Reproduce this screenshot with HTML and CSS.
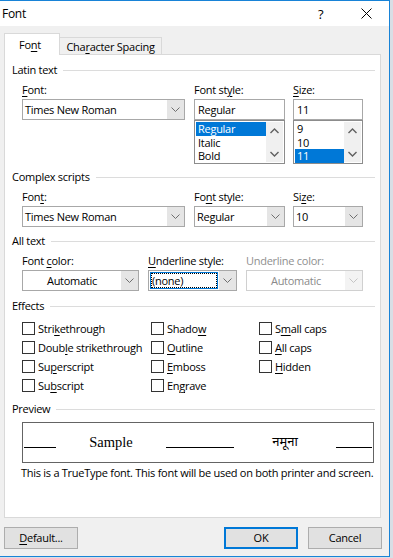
FILE: index.html
```html
<!DOCTYPE html>
<html>
<head>
<meta charset="utf-8">
<link rel="stylesheet" href="styles.css">
</head>
<body>
<div class="dialog">
  <div class="titlebar">
    <span class="title">Font</span>
    <span class="help">?</span>
    <svg class="close" width="11" height="11" viewBox="0 0 11 11"><path d="M0.5 0.5 L10.5 10.5 M10.5 0.5 L0.5 10.5" stroke="#000" stroke-width="1" fill="none"/></svg>
  </div>
  <div class="body">
    <div class="tabs">
      <div class="tab active">Fo<u>n</u>t</div>
      <div class="tab">Cha<u>r</u>acter Spacing</div>
    </div>
    <div class="panel">
      <div class="group-head"><span>Latin text</span><i class="rule"></i></div>
      <div class="row">
        <div class="field c-font">
          <div class="lbl"><u>F</u>ont:</div>
          <div class="combo"><span class="val">Times New Roman</span><span class="btn"><svg width="9" height="5" viewBox="0 0 9 5"><path d="M0.5 0.5 L4.5 4.5 L8.5 0.5" stroke="#6e6e6e" fill="none"/></svg></span></div>
        </div>
        <div class="field c-style">
          <div class="lbl">Font st<u>y</u>le:</div>
          <div class="textbox">Regular</div>
          <div class="listbox">
            <div class="items">
              <div class="item sel">Regular</div>
              <div class="item">Italic</div>
              <div class="item">Bold</div>
            </div>
            <div class="scroll">
              <svg width="9" height="6" viewBox="0 0 9 6"><path d="M0.5 5 L4.5 1 L8.5 5" stroke="#606060" stroke-width="1.4" fill="none"/></svg>
              <svg width="9" height="6" viewBox="0 0 9 6"><path d="M0.5 1 L4.5 5 L8.5 1" stroke="#606060" stroke-width="1.4" fill="none"/></svg>
            </div>
          </div>
        </div>
        <div class="field c-size">
          <div class="lbl"><u>S</u>ize:</div>
          <div class="textbox">11</div>
          <div class="listbox">
            <div class="items">
              <div class="item">9</div>
              <div class="item">10</div>
              <div class="item sel">11</div>
            </div>
            <div class="scroll">
              <svg width="9" height="6" viewBox="0 0 9 6"><path d="M0.5 5 L4.5 1 L8.5 5" stroke="#606060" stroke-width="1.4" fill="none"/></svg>
              <svg width="9" height="6" viewBox="0 0 9 6"><path d="M0.5 1 L4.5 5 L8.5 1" stroke="#606060" stroke-width="1.4" fill="none"/></svg>
            </div>
          </div>
        </div>
      </div>

      <div class="group-head g2"><span>Complex scripts</span><i class="rule"></i></div>
      <div class="row">
        <div class="field c-font">
          <div class="lbl">Fon<u>t</u>:</div>
          <div class="combo"><span class="val">Times New Roman</span><span class="btn"><svg width="9" height="5" viewBox="0 0 9 5"><path d="M0.5 0.5 L4.5 4.5 L8.5 0.5" stroke="#6e6e6e" fill="none"/></svg></span></div>
        </div>
        <div class="field c-style">
          <div class="lbl">Fo<u>n</u>t style:</div>
          <div class="combo"><span class="val">Regular</span><span class="btn"><svg width="9" height="5" viewBox="0 0 9 5"><path d="M0.5 0.5 L4.5 4.5 L8.5 0.5" stroke="#6e6e6e" fill="none"/></svg></span></div>
        </div>
        <div class="field c-size">
          <div class="lbl">Si<u>z</u>e:</div>
          <div class="combo"><span class="val">10</span><span class="btn"><svg width="9" height="5" viewBox="0 0 9 5"><path d="M0.5 0.5 L4.5 4.5 L8.5 0.5" stroke="#6e6e6e" fill="none"/></svg></span></div>
        </div>
      </div>

      <div class="group-head g3"><span>All text</span><i class="rule"></i></div>
      <div class="row row-all">
        <div class="field c-color">
          <div class="lbl">Font <u>c</u>olor:</div>
          <div class="combo"><span class="val center">Automatic</span><span class="btn"><svg width="9" height="5" viewBox="0 0 9 5"><path d="M0.5 0.5 L4.5 4.5 L8.5 0.5" stroke="#6e6e6e" fill="none"/></svg></span></div>
        </div>
        <div class="field c-ustyle">
          <div class="lbl"><u>U</u>nderline style:</div>
          <div class="combo focus"><span class="val"><span class="focusbox">(none)</span></span><span class="btn"><svg width="9" height="5" viewBox="0 0 9 5"><path d="M0.5 0.5 L4.5 4.5 L8.5 0.5" stroke="#6e6e6e" fill="none"/></svg></span></div>
        </div>
        <div class="field c-ucolor">
          <div class="lbl disabled">Underline color:</div>
          <div class="combo dis"><span class="val center">Automatic</span><span class="btn"><svg width="9" height="5" viewBox="0 0 9 5"><path d="M0.5 0.5 L4.5 4.5 L8.5 0.5" stroke="#c4c4c4" fill="none"/></svg></span></div>
        </div>
      </div>

      <div class="group-head g4"><span>Effects</span><i class="rule"></i></div>
      <div class="effects">
        <div class="chk"><span class="box"></span><span>Stri<u>k</u>ethrough</span></div>
        <div class="chk"><span class="box"></span><span>Shado<u>w</u></span></div>
        <div class="chk"><span class="box"></span><span>S<u>m</u>all caps</span></div>
        <div class="chk"><span class="box"></span><span>Doub<u>l</u>e strikethrough</span></div>
        <div class="chk"><span class="box"></span><span><u>O</u>utline</span></div>
        <div class="chk"><span class="box"></span><span><u>A</u>ll caps</span></div>
        <div class="chk"><span class="box"></span><span>Su<u>p</u>erscript</span></div>
        <div class="chk"><span class="box"></span><span><u>E</u>mboss</span></div>
        <div class="chk"><span class="box"></span><span><u>H</u>idden</span></div>
        <div class="chk"><span class="box"></span><span>Su<u>b</u>script</span></div>
        <div class="chk"><span class="box"></span><span>En<u>g</u>rave</span></div>
      </div>

      <div class="group-head g5"><span>Preview</span><i class="rule"></i></div>
      <div class="preview">
        <span class="pline l1"></span>
        <span class="ptext s1">Sample</span>
        <span class="pline l2"></span>
        <span class="ptext s2 deva">नमूना</span>
        <span class="pline l3"></span>
      </div>
      <div class="note">This is a TrueType font. This font will be used on both printer and screen.</div>
    </div>
    <div class="buttons">
      <div class="button b-default"><u>D</u>efault...</div>
      <div class="button b-ok">OK</div>
      <div class="button b-cancel">Cancel</div>
    </div>
  </div>
</div>
</body>
</html>
```

FILE: styles.css
```css
html, body {
  margin: 0;
  padding: 0;
}
body {
  width: 393px;
  height: 558px;
  overflow: hidden;
  background: #d9dee5;
  font-family: "Open Sans", "Noto Sans", sans-serif;
  font-size: 11px;
  letter-spacing: -0.27px;
  color: #000;
}
u {
  text-decoration-thickness: 1px;
  text-underline-offset: 2px;
}
.dialog {
  width: 389px;
  height: 555px;
  border: 1px solid #1883d7;
  border-left: none;
  background: #f0f0f0;
  display: flex;
  flex-direction: column;
}
.titlebar {
  height: 25px;
  background: #fff;
  display: flex;
  align-items: center;
  padding-right: 17px;
}
.title {
  margin-left: 2px;
  font-size: 12px;
}
.help {
  margin-left: auto;
  font-size: 13px;
  width: 7px;
  margin-right: 36px;
}
.close {
  display: block;
}
.body {
  padding-top: 7px;
  display: flex;
  flex-direction: column;
}
.tabs {
  display: flex;
  align-items: flex-end;
  height: 22px;
  padding-left: 4px;
  margin-bottom: -1px;
}
.tab {
  box-sizing: border-box;
  height: 18px;
  border: 1px solid #d9d9d9;
  border-bottom: none;
  border-left: none;
  background: #f0f0f0;
  width: 102px;
  text-align: center;
  line-height: 17px;
}
.tab.active {
  position: relative;
  z-index: 1;
  height: 22px;
  width: 56px;
  border-left: 1px solid #d9d9d9;
  background: #fff;
  line-height: 22px;
  padding-right: 4px;
}
.panel {
  box-sizing: border-box;
  height: 464px;
  margin: 0 8px 0 4px;
  border: 1px solid #d9d9d9;
  background: #fff;
  padding: 8px 5px 0 7px;
}
.group-head {
  display: flex;
  align-items: center;
  height: 14px;
  line-height: 14px;
  margin-bottom: 6px;
}
.group-head .rule {
  flex: 1;
  height: 1px;
  background: #dcdcdc;
  margin-left: 6px;
}
.g2 { margin-top: 6px; }
.g3 { margin-top: 7px; }
.g4 { margin-top: 8px; }
.g5 { margin-top: 7px; }
.row {
  display: flex;
  margin-left: 10px;
}
.field {
  display: flex;
  flex-direction: column;
}
.c-font { width: 163px; margin-right: 9px; }
.c-style { width: 91px; margin-right: 8px; }
.c-size { width: 70px; }
.c-color { width: 117px; margin-right: 9px; }
.c-ustyle { width: 89px; margin-right: 9px; }
.c-ucolor { width: 117px; }
.lbl {
  height: 14px;
  line-height: 14px;
  margin-bottom: 2px;
  white-space: nowrap;
}
.lbl.disabled {
  color: #8f8f8f;
}
.combo {
  box-sizing: border-box;
  height: 21px;
  border: 1px solid #a8a8a8;
  background: #fff;
  display: flex;
}
.combo .val {
  flex: 1;
  padding-left: 2px;
  line-height: 19px;
  white-space: nowrap;
  overflow: hidden;
}
.combo .val.center {
  text-align: center;
  padding-left: 0;
}
.combo .btn {
  width: 17px;
  background: #e5e5e5;
  display: flex;
  align-items: center;
  justify-content: center;
}
.combo.dis {
  border-color: #d0d0d0;
  color: #8a8a8a;
}
.combo.dis .btn {
  background: #f3f3f3;
}
.combo.focus .val {
  padding: 1px;
  display: flex;
}
.focusbox {
  flex: 1;
  border: 1px solid #0078d7;
  outline: 1px dotted #000;
  outline-offset: -2px;
  line-height: 15px;
  padding-left: 1px;
}
.textbox {
  box-sizing: border-box;
  height: 21px;
  border: 1px solid #a8a8a8;
  padding-left: 3px;
  line-height: 19px;
}
.listbox {
  box-sizing: border-box;
  height: 44px;
  border: 1px solid #8c8c8c;
  padding: 1px;
  display: flex;
}
.items {
  flex: 1;
}
.item {
  height: 13.5px;
  line-height: 13px;
  padding-left: 2px;
}
.item.sel {
  background: #0078d7;
  color: #fff;
}
.scroll {
  width: 17px;
  background: #f0f0f0;
  display: flex;
  flex-direction: column;
  align-items: center;
  justify-content: space-between;
  padding: 6px 0 5px;
  box-sizing: border-box;
}
.scroll svg { display: block; }
.effects {
  display: grid;
  grid-template-columns: 129px 108px 1fr;
  grid-auto-rows: 19px;
  margin-left: 10px;
  margin-top: 4px;
}
.chk {
  display: flex;
  align-items: center;
  white-space: nowrap;
}
.chk .box {
  box-sizing: border-box;
  width: 13px;
  height: 13px;
  border: 1px solid #333;
  margin-right: 3px;
  flex: none;
}
.chk:nth-child(10) { grid-column: 1; }
.preview {
  box-sizing: border-box;
  height: 41px;
  margin-left: 10px;
  width: 352px;
  border: 1px solid #646464;
  display: flex;
  align-items: flex-start;
  font-family: "Liberation Serif", serif;
  letter-spacing: 0;
}
.pline {
  height: 24px;
  border-bottom: 1px solid #000;
}
.l1 { width: 32px; margin-left: 1px; }
.l2 { width: 68px; }
.l3 { width: 36px; }
.ptext {
  font-size: 14.5px;
  line-height: 17px;
  margin-top: 11px;
  text-align: center;
}
.s1 { width: 110px; }
.s2 { width: 102px; }
.deva {
  font-family: "Noto Sans Devanagari", "Noto Serif Devanagari", "Lohit Devanagari", "Liberation Serif", serif;
  font-size: 13px;
}
.note {
  margin-top: 3px;
  margin-left: 9px;
  line-height: 14px;
  white-space: nowrap;
}
.buttons {
  display: flex;
  margin-top: 9px;
  padding-left: 4px;
  padding-right: 7px;
}
.button {
  box-sizing: border-box;
  height: 22px;
  width: 74px;
  border: 1px solid #adadad;
  background: #e1e1e1;
  text-align: center;
  line-height: 20px;
}
.b-ok {
  margin-left: auto;
  margin-right: 10px;
  border: 2px solid #0078d7;
  line-height: 18px;
}
```
